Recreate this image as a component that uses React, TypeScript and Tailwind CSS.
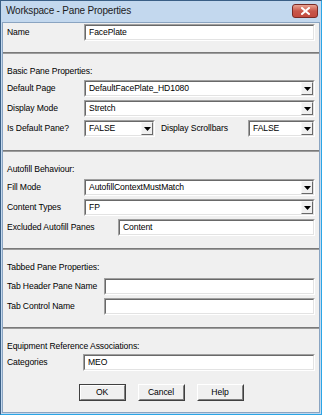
import React from "react";

const font = "font-['Liberation_Sans',Arial,sans-serif]";
const txt = "text-[8.6px] tracking-[-0.1px] leading-none";

function Arrow() {
  return (
    <div className="flex h-full w-[12px] items-center justify-center border border-t-[#f8f8f8] border-l-[#f8f8f8] border-b-[#696969] border-r-[#696969] bg-[#f0f0f0]">
      <svg width="7" height="4" viewBox="0 0 7 4">
        <path d="M0 0h7L3.5 4z" fill="#000" />
      </svg>
    </div>
  );
}

function Box({ value = "", dropdown = false, className = "" }: { value?: string; dropdown?: boolean; className?: string }) {
  return (
    <div className={`flex h-[17px] border border-t-[#a0a0a0] border-l-[#a0a0a0] border-b-white border-r-white ${className}`}>
      <div className="flex flex-1 items-center border border-t-[#696969] border-l-[#696969] border-b-[#e3e3e3] border-r-[#e3e3e3] bg-white">
        <span className={`flex-1 truncate pl-[3px] ${txt}`}>{value}</span>
        {dropdown && <Arrow />}
      </div>
    </div>
  );
}

function Row({ label, labelW = "w-[77px]", value, dropdown }: { label: string; labelW?: string; value?: string; dropdown?: boolean }) {
  return (
    <div className="flex items-center">
      <span className={`${labelW} shrink-0 ${txt}`}>{label}</span>
      <Box value={value} dropdown={dropdown} className="flex-1" />
    </div>
  );
}

function Separator({ className = "" }: { className?: string }) {
  return <div className={`h-[2px] border-t border-t-[#7a7a7a] border-b border-b-[#9c9c9c] ${className}`} />;
}

function Heading({ children, className = "" }: { children: React.ReactNode; className?: string }) {
  return <div className={`h-[12px] text-[8.6px] tracking-[-0.1px] leading-[12px] ${className}`}>{children}</div>;
}

function Button({ children, isDefault = false }: { children: React.ReactNode; isDefault?: boolean }) {
  return (
    <div className={`flex h-[17px] w-[47px] ${isDefault ? "border border-[#404040]" : "border border-t-white border-l-white border-b-[#404040] border-r-[#404040]"}`}>
      <div className={`flex flex-1 items-center justify-center bg-[#f0f0f0] ${txt} ${isDefault ? "border border-t-white border-l-white border-b-[#808080] border-r-[#808080]" : "border border-t-[#f0f0f0] border-l-[#f0f0f0] border-b-[#808080] border-r-[#808080]"}`}>
        {children}
      </div>
    </div>
  );
}

export default function App() {
  return (
    <div className={`${font} flex h-[415px] w-[322px] flex-col border border-[#3a5f86] border-r-[#2ba6e6] border-b-[#2ba6e6] bg-[#c3d8ee] text-black`}>
      {/* title bar */}
      <div className="relative h-[21px] shrink-0">
        <span className="absolute left-[5px] top-[4px] text-[10px] tracking-[-0.2px] leading-[12px] text-[#1b1b1b]">Workspace - Pane Properties</span>
        <div className="absolute right-[3px] top-[3px] flex h-[14px] w-[26px] items-center justify-center rounded-[3px] border border-[#7a2a25] bg-gradient-to-b from-[#e8a393] via-[#c8564a] to-[#c34a3e]">
          <svg width="9" height="8" viewBox="0 0 9 8">
            <path d="M1 1l7 6M8 1L1 7" stroke="#fff" strokeWidth="2" strokeLinecap="square" />
          </svg>
        </div>
      </div>

      {/* body */}
      <div className="mx-[1px] mb-[1px] flex flex-1 flex-col border border-[#8aa4c1] bg-[#f0f0f0] pt-[1px]">
        <div className="px-[4px]">
          <Row label="Name" value="FacePlate" />
        </div>
        <Separator className="mt-[11px]" />

        <div className="flex flex-col px-[4px]">
          <Heading className="mt-[11px]">Basic Pane Properties:</Heading>
          <div className="mt-[3px] flex flex-col gap-[3px]">
            <Row label="Default Page" value="DefaultFacePlate_HD1080" dropdown />
            <Row label="Display Mode" value="Stretch" dropdown />
            <div className="flex items-center">
              <span className={`w-[77px] shrink-0 ${txt}`}>Is Default Pane?</span>
              <Box value="FALSE" dropdown className="w-[71px]" />
              <span className={`ml-[6px] w-[87px] shrink-0 ${txt}`}>Display Scrollbars</span>
              <Box value="FALSE" dropdown className="flex-1" />
            </div>
          </div>
        </div>
        <Separator className="mt-[13px]" />

        <div className="flex flex-col px-[4px]">
          <Heading className="mt-[11px]">Autofill Behaviour:</Heading>
          <div className="mt-[4px] flex flex-col gap-[3px]">
            <Row label="Fill Mode" value="AutofillContextMustMatch" dropdown />
            <Row label="Content Types" value="FP" dropdown />
            <Row label="Excluded Autofill Panes" labelW="w-[111px]" value="Content" />
          </div>
        </div>
        <Separator className="mt-[12px]" />

        <div className="flex flex-col px-[4px]">
          <Heading className="mt-[11px]">Tabbed Pane Properties:</Heading>
          <div className="mt-[5px] flex flex-col gap-[3px]">
            <Row label="Tab Header Pane Name" labelW="w-[97px]" value="" />
            <Row label="Tab Control Name" labelW="w-[97px]" value="" />
          </div>
        </div>
        <Separator className="mt-[12px]" />

        <div className="flex flex-col px-[4px]">
          <Heading className="mt-[11px]">Equipment Reference Associations:</Heading>
          <div className="mt-[2px]">
            <Row label="Categories" labelW="w-[76px]" value="MEO" />
          </div>
          <div className="mt-[13px] flex justify-center gap-[12px]">
            <Button isDefault>OK</Button>
            <Button>Cancel</Button>
            <Button>Help</Button>
          </div>
        </div>
      </div>
    </div>
  );
}
